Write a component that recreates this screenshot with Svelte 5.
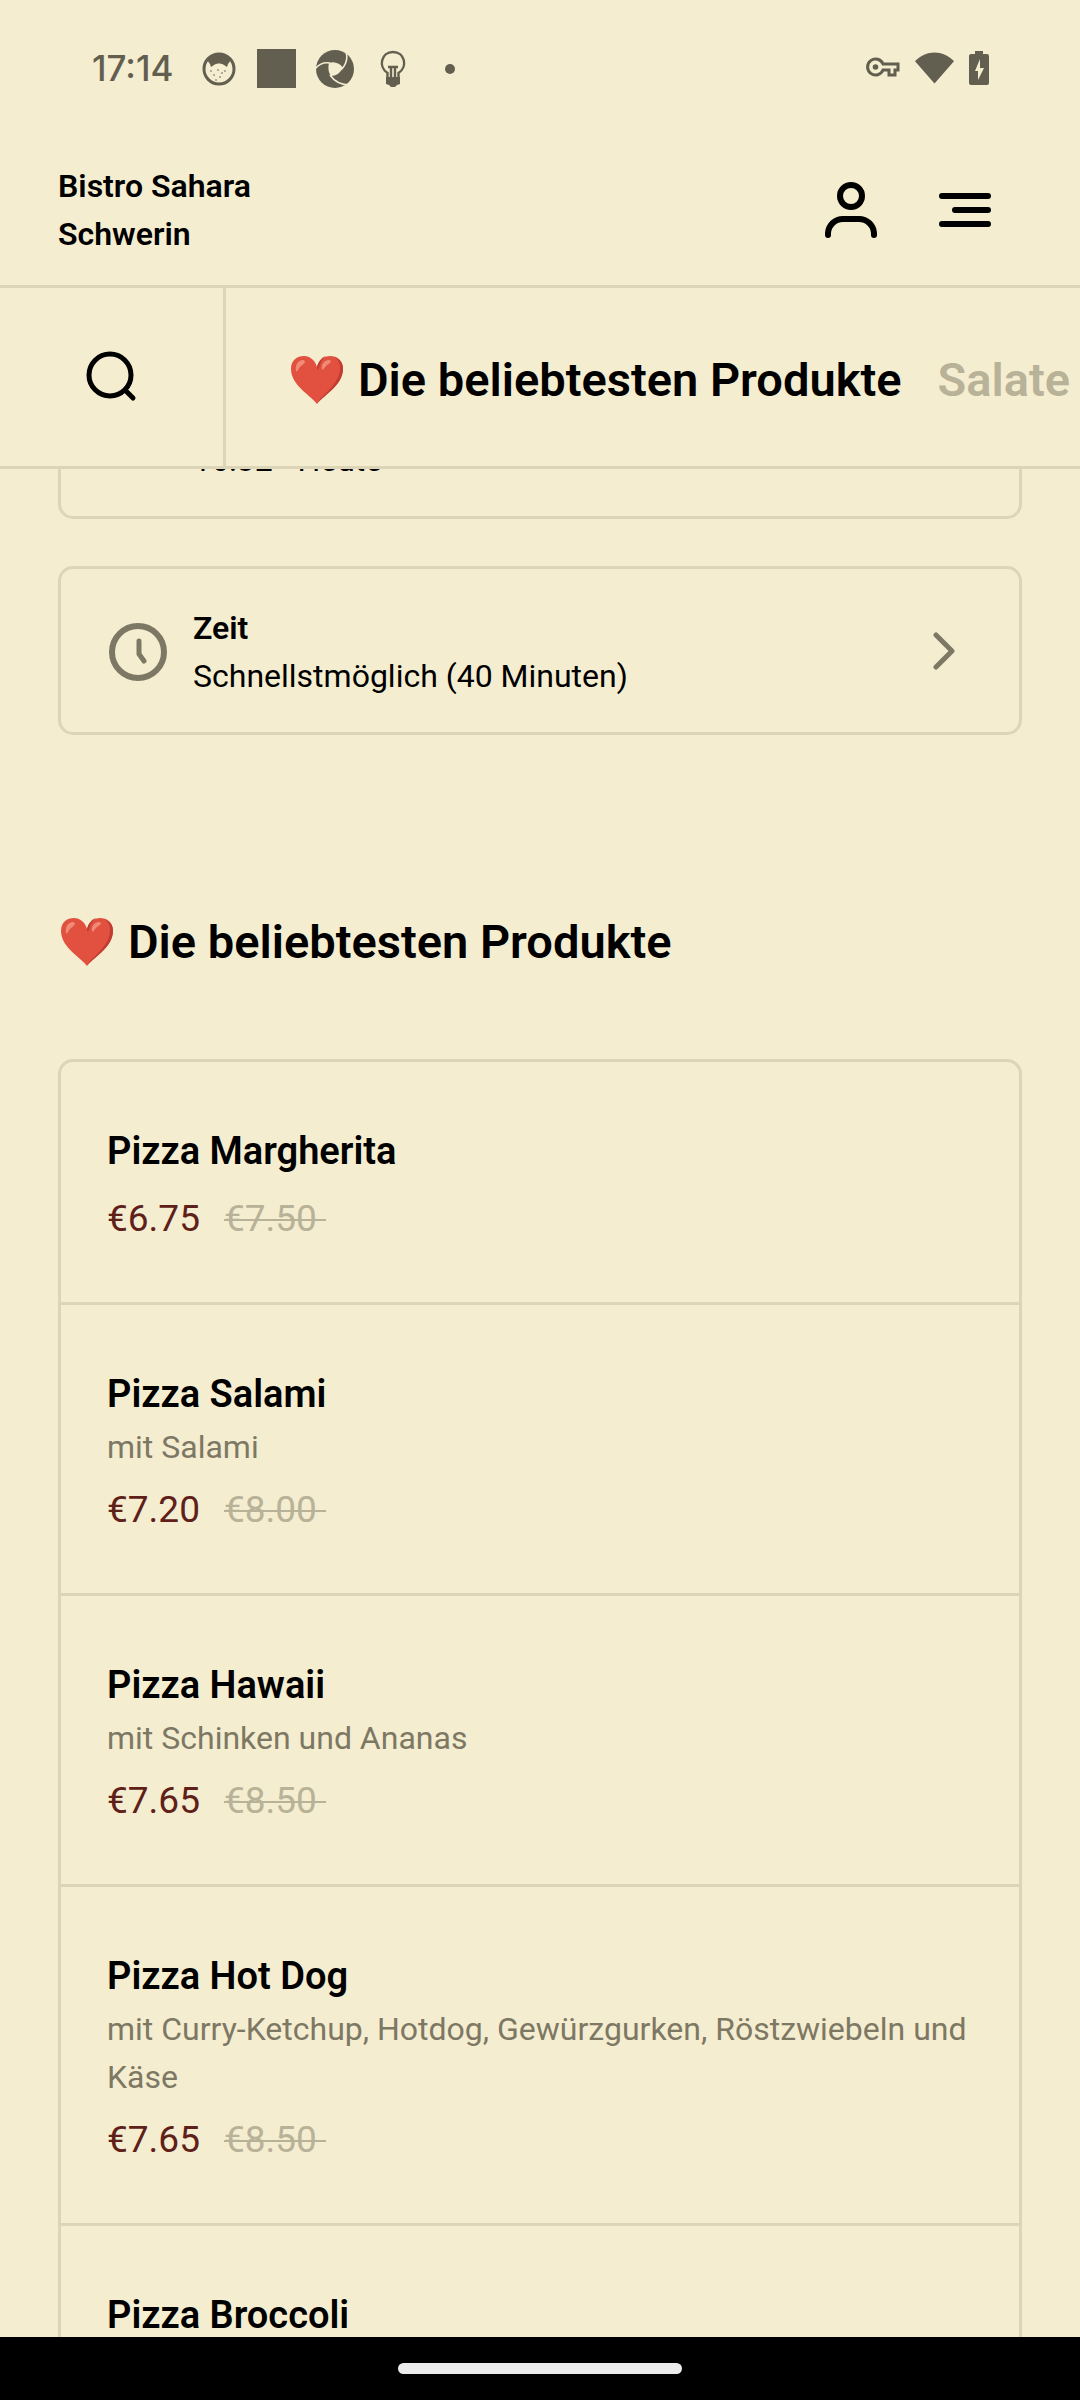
<script>
  const products = [
    { name: 'Pizza Margherita', price: '€6.75', old: '€7.50' },
    { name: 'Pizza Salami', text: 'mit Salami', price: '€7.20', old: '€8.00' },
    { name: 'Pizza Hawaii', text: 'mit Schinken und Ananas', price: '€7.65', old: '€8.50' },
    {
      name: 'Pizza Hot Dog',
      text: 'mit Curry-Ketchup, Hotdog, Gewürzgurken, Röstzwiebeln und Käse',
      price: '€7.65',
      old: '€8.50'
    },
    { name: 'Pizza Broccoli' }
  ];
</script>

{#snippet heart()}
  <svg class="heart" viewBox="0 0 54 50" aria-hidden="true">
    <path d="M27 49C23 42 1 31 1 14C1 5 7 1 14 1c6 0 11 4 13 11C29 5 34 1 40 1c7 0 13 4 13 13C53 31 31 42 27 49Z" fill="#e2513f" />
    <path d="M44 2c6 2 9 6 9 12C53 31 31 42 27 49C31 40 50 30 50 13c0-5-2-9-6-11ZM27 12c1-5 4-9 9-11c-4 3-6 7-7 12c-1 2-2 2-2-1Z" fill="#bf3d32" />
    <path d="M6 16c-1-6 2-11 7-11c4 1 1 4-2 6s-3 7-5 5ZM32 14c-1-5 3-9 7-9c4 1 1 3-2 5s-3 6-5 4Z" fill="#f08b78" />
  </svg>
{/snippet}

<div class="app">
  <div class="status">
    <span class="time">17:14</span>
    <div class="notes">
      <svg width="39" height="39" viewBox="0 0 39 39">
        <circle cx="20" cy="20" r="15" fill="none" stroke="currentColor" stroke-width="3" />
        <path d="M8 11C13 4 27 4 32 11L29 15L28 18L25 16C22 14 18 14 15 16L12 18L11 15Z" fill="currentColor" />
        <g fill="currentColor"><circle cx="12" cy="22" r="0.800" /><circle cx="19" cy="21" r="0.800" /><circle cx="26" cy="22" r="0.800" /><circle cx="15" cy="26" r="0.800" /><circle cx="23" cy="24" r="0.800" /><circle cx="21" cy="28" r="0.800" /><circle cx="17" cy="31" r="0.800" /></g>
      </svg>
      <svg width="39" height="39" viewBox="0 0 39 39"><path d="M0 0h39v39H0Z" fill="currentColor" /></svg>
      <svg width="39" height="39" viewBox="0 0 39 39">
        <circle cx="20" cy="20" r="19" fill="currentColor" />
        <path d="M14 14C19 12 25 14 28 19C25 24 21 27 16 27C13 23 13 18 14 14Z" fill="#f5edd0" />
        <g fill="none" stroke="#f5edd0" stroke-width="1.6">
          <path d="M0 20C4 15 9 13 15 14M31 3C33 9 31 15 27 20M15 26C19 32 26 36 35 36" />
        </g>
      </svg>
      <svg width="39" height="39" viewBox="0 0 39 39">
        <path d="M14.500 29v-5C5 18 8 3 20 3s15 15 5.500 21v5" fill="none" stroke="currentColor" stroke-width="2.400" />
        <path d="M13 28h14v7l-3 1-2 2h-4l-2-2-3-1Z" fill="currentColor" />
        <path d="M15 18H25M18 18V29M22 18V29" fill="none" stroke="currentColor" stroke-width="2.400" />
      </svg>
      <svg width="10" height="39" viewBox="0 0 10 39"><circle cx="5" cy="20" r="5" fill="currentColor" /></svg>
    </div>
    <div class="system">
      <svg width="34" height="22" viewBox="0 0 34 22">
        <path d="M17 7h15v6h-3v5h-6v-5h-6a8 8 0 1 1 0-6Z" fill="none" stroke="currentColor" stroke-width="3" />
        <circle cx="9.500" cy="10" r="2.800" fill="currentColor" />
      </svg>
      <svg width="39" height="34" viewBox="0 0 40 34"><path d="M0 10C11-2 29-2 40 10L20 33Z" fill="currentColor" /></svg>
      <svg width="20" height="34" viewBox="0 0 20 34">
        <path d="M6 0h8v3h4a2 2 0 0 1 2 2v27a2 2 0 0 1-2 2H2a2 2 0 0 1-2-2V5a2 2 0 0 1 2-2h4Z" fill="currentColor" />
        <path d="M11 8v9h4L9 29v-9H6Z" fill="#f5edd0" />
      </svg>
    </div>
  </div>

  <header>
    <a class="brand" href="#top">Bistro Sahara<br />Schwerin</a>
    <div class="actions">
      <button aria-label="Konto">
        <svg width="52" height="58" viewBox="0 0 52 58" fill="none" stroke="#000" stroke-width="6" stroke-linecap="round">
          <circle cx="26" cy="15" r="11" />
          <path d="M3 54v-2A15 15 0 0 1 18 38H34A15 15 0 0 1 49 52v2" />
        </svg>
      </button>
      <button aria-label="Menü">
        <svg width="52" height="58" viewBox="0 0 52 58" fill="none" stroke="#000" stroke-width="6" stroke-linecap="round">
          <path d="M3 15H49M16 29H49M3 43H49" />
        </svg>
      </button>
    </div>
  </header>

  <div class="nav">
    <button class="search" aria-label="Suche">
      <svg width="52" height="52" viewBox="0 0 52 52" fill="none" stroke="#000" stroke-width="5" stroke-linecap="round">
        <circle cx="24" cy="24" r="21" />
        <path d="M39 39L47 47" />
      </svg>
    </button>
    <nav>
      <a class="active" href="#beliebt">{@render heart()}Die beliebtesten Produkte</a>
      <a href="#salate">Salate</a>
    </nav>
  </div>

  <main>
    <button class="card first">
      <span class="info"><span>16:32 - Heute</span></span>
    </button>
    <button class="card">
      <svg width="60" height="60" viewBox="0 0 60 60" fill="none" stroke="#7d7864" stroke-width="6" stroke-linecap="round" stroke-linejoin="round">
        <circle cx="30" cy="30" r="26" />
        <path d="M31 19V32L36 39" stroke-width="5" />
      </svg>
      <span class="info"><b>Zeit</b><span>Schnellstmöglich (40 Minuten)</span></span>
      <svg width="24" height="40" viewBox="0 0 24 40" fill="none" stroke="#7d7864" stroke-width="5" stroke-linecap="round" stroke-linejoin="round">
        <path d="M4 3L20 19L4 35" />
      </svg>
    </button>

    <h2 id="beliebt">{@render heart()}Die beliebtesten Produkte</h2>

    <ul>
      {#each products as p}
        <li>
          <h3>{p.name}</h3>
          {#if p.text}<p>{p.text}</p>{/if}
          {#if p.price}
            <div class="prices"><span>{p.price}</span><s>{p.old}&nbsp;</s></div>
          {/if}
        </li>
      {/each}
    </ul>
  </main>

  <footer><div class="pill"></div></footer>
</div>

<style>
  :global(body) {
    background: #f5edd0;
  }
  .app {
    --bg: #f5edd0;
    --line: #dcd5b8;
    display: flex;
    flex-direction: column;
    height: 100vh;
    overflow: hidden;
    background: var(--bg);
    color: #000;
    font: 400 32px/48px Roboto, sans-serif;
  }
  svg {
    display: block;
    flex: none;
  }
  button {
    border: 0;
    padding: 0;
    background: none;
    color: inherit;
    font: inherit;
    text-align: left;
  }
  a {
    color: inherit;
    text-decoration: none;
  }
  .status {
    display: flex;
    align-items: center;
    padding: 44px 91px 0 92px;
    height: 48px;
    color: #625f51;
  }
  .time {
    font: 500 35px/48px Inter, sans-serif;
    width: 107px;
  }
  .notes {
    display: flex;
    gap: 19px;
    flex: 1;
  }
  .notes svg:last-child {
    margin-left: 14px;
  }
  .system {
    display: flex;
    align-items: center;
    gap: 15px;
  }
  header {
    display: flex;
    align-items: center;
    justify-content: space-between;
    padding: 70px 89px 27px 58px;
    border-bottom: 3px solid var(--line);
  }
  .brand {
    font-weight: 600;
  }
  .actions {
    display: flex;
    gap: 62px;
  }
  .nav {
    position: relative;
    z-index: 1;
    display: flex;
    background: var(--bg);
    border-bottom: 3px solid var(--line);
    height: 178px;
    flex: none;
  }
  .search {
    display: flex;
    align-items: center;
    justify-content: center;
    width: 226px;
    flex: none;
    box-sizing: border-box;
    border-right: 3px solid var(--line);
  }
  nav {
    display: flex;
    align-items: center;
    gap: 36px;
    padding: 6px 0 0 64px;
    overflow: hidden;
    white-space: nowrap;
    font-size: 47px;
    line-height: 70px;
    font-weight: 600;
    color: #b8b298;
  }
  nav a {
    display: flex;
    align-items: center;
  }
  .active {
    color: #000;
  }
  .heart {
    width: 54px;
    height: 50px;
    margin-right: 14px;
  }
  main {
    flex: 1;
    min-height: 0;
    overflow: hidden;
    padding: 0 58px;
  }
  .card {
    display: flex;
    align-items: center;
    box-sizing: border-box;
    width: 100%;
    padding: 35px 63px 32px 47px;
    margin-bottom: 47px;
    border: 3px solid var(--line);
    border-radius: 15px;
  }
  .first {
    margin-top: -71px;
    padding-left: 132px;
  }
  .info {
    display: flex;
    flex-direction: column;
    flex: 1;
  }
  .card svg + .info {
    padding-left: 25px;
  }
  b {
    font-weight: 600;
  }
  h2 {
    display: flex;
    align-items: center;
    margin: 172px 0 82px;
    padding-left: 2px;
    font-size: 47px;
    line-height: 70px;
    font-weight: 600;
  }
  ul {
    list-style: none;
    margin: 0;
    padding: 0;
    border: 3px solid var(--line);
    border-radius: 15px;
  }
  li {
    padding: 60px 46px 54px;
  }
  li + li {
    border-top: 3px solid var(--line);
  }
  h3 {
    margin: 0;
    font-size: 38px;
    line-height: 58px;
    font-weight: 600;
  }
  p {
    margin: 0;
    color: #7d7864;
  }
  .prices {
    display: flex;
    gap: 24px;
    padding-top: 10px;
    font-size: 37px;
    line-height: 58px;
    color: #5e2018;
  }
  s {
    color: #b8b298;
    text-decoration-thickness: 2px;
  }
  footer {
    display: flex;
    align-items: center;
    justify-content: center;
    flex: none;
    height: 63px;
    background: #000;
  }
  .pill {
    width: 284px;
    height: 11px;
    border-radius: 6px;
    background: #ececec;
  }
</style>
